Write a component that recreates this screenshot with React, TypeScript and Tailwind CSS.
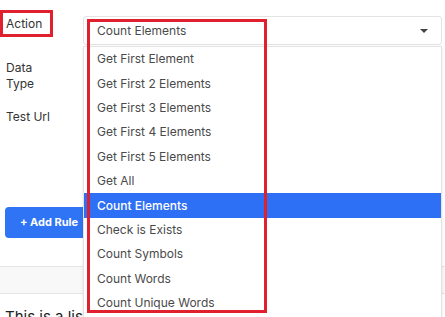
const options = [
  "Get First Element",
  "Get First 2 Elements",
  "Get First 3 Elements",
  "Get First 4 Elements",
  "Get First 5 Elements",
  "Get All",
  "Count Elements",
  "Check is Exists",
  "Count Symbols",
  "Count Words",
  "Count Unique Words",
];

export default function App() {
  const selected = "Count Elements";

  return (
    <div
      className="relative h-[317px] w-[445px] overflow-hidden bg-white text-[12px] text-[#4a4a4a]"
      style={{ fontFamily: "Inter, 'Noto Sans', sans-serif" }}
    >
      {/* form rows */}
      <div className="flex flex-col pt-[16px]">
        <div className="flex items-start">
          <div className="w-[83px] pl-[6px] leading-[16px] text-[#333]">Action</div>
          <div className="flex h-[29px] w-[359px] items-center justify-between rounded-[3px] border border-[#e3e3e3] pl-[13px] pr-[13px]">
            <span>{selected}</span>
            <span className="h-0 w-0 border-x-[4px] border-t-[4px] border-x-transparent border-t-[#444]" />
          </div>
        </div>

        <div className="mt-[15px] w-[83px] pl-[6px] leading-[16px] text-[#333]">
          Data
          <br />
          Type
        </div>

        <div className="mt-[17px] w-[83px] pl-[6px] leading-[16px] text-[#333]">Test Url</div>

        <div className="mt-[82px] pl-[5px]">
          <button
            type="button"
            className="h-[31px] rounded-[4px] bg-[#2f74f5] px-[15px] text-[11px] font-bold text-white"
          >
            + Add Rule
          </button>
        </div>

        <div className="mt-[28px] h-[28px] border-y border-[#e6e6e6] bg-[#f8f8f8]" />

        <div className="pl-[5px] pt-[13px] text-[15px] leading-[20px] text-[#222]">
          This is a list of rules
        </div>
      </div>

      {/* open dropdown menu */}
      <ul className="absolute left-[83px] top-[46px] z-10 w-[359px] rounded-b-[3px] border border-[#e3e3e3] bg-white pb-[4px] shadow-sm">
        {options.map((opt) => (
          <li
            key={opt}
            className={`flex h-[24.4px] items-center pl-[13px] ${
              opt === selected ? "bg-[#2d6ff5] font-medium text-white" : ""
            }`}
          >
            {opt}
          </li>
        ))}
      </ul>

      {/* annotation boxes */}
      <div className="absolute left-0 top-[10px] z-20 h-[27px] w-[53px] border-[3px] border-[#e0202c]" />
      <div className="absolute left-[87px] top-[19px] z-20 h-[294px] w-[180px] border-[3px] border-[#e0202c]" />
    </div>
  );
}
